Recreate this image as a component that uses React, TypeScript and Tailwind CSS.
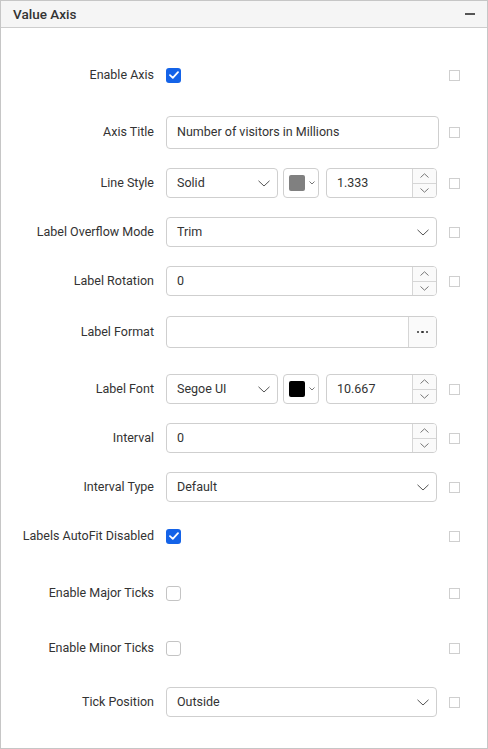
import React from "react";

const font = { fontFamily: "Roboto, 'Liberation Sans', sans-serif" };

function Chevron() {
  return (
    <svg width="12" height="7" viewBox="0 0 12 7" fill="none">
      <path d="M0.5 0.8 L6 6 L11.5 0.8" stroke="#555" strokeWidth="1" />
    </svg>
  );
}

function SmallChevron({ up = false }: { up?: boolean }) {
  return (
    <svg width="9" height="5" viewBox="0 0 9 5" fill="none">
      <path d={up ? "M0.5 4.5 L4.5 0.8 L8.5 4.5" : "M0.5 0.5 L4.5 4.2 L8.5 0.5"} stroke="#777" strokeWidth="1" />
    </svg>
  );
}

function Side() {
  return <div className="w-[11px] h-[11px] border border-[#cfcfcf] bg-white shrink-0" />;
}

function Check({ on }: { on: boolean }) {
  if (!on) return <div className="w-[15px] h-[15px] rounded-[3px] border border-[#c4c4c4] bg-white" />;
  return (
    <div className="w-[15px] h-[15px] rounded-[3px] bg-[#1463e8] flex items-center justify-center">
      <svg width="10" height="8" viewBox="0 0 10 8" fill="none">
        <path d="M1 4.2 L3.8 6.8 L9 1.2" stroke="white" strokeWidth="1.8" strokeLinecap="round" strokeLinejoin="round" />
      </svg>
    </div>
  );
}

function Row({ label, h = 30, mt, children, side = true }: { label: string; h?: number; mt: string; children: React.ReactNode; side?: boolean }) {
  return (
    <div className={`flex items-center ${mt}`} style={{ height: h }}>
      <div className="w-[165px] pr-[12px] text-right text-[12.5px] text-[#333] shrink-0">{label}</div>
      <div className="w-[283px] h-full flex items-center shrink-0">{children}</div>
      {side && <Side />}
    </div>
  );
}

function Select({ value, w }: { value: string; w: string }) {
  return (
    <div className={`${w} h-full border border-[#cfcfcf] rounded-[4px] flex items-center justify-between pl-[10px] pr-[7px] text-[12.5px] text-[#333] bg-white`}>
      <span>{value}</span>
      <Chevron />
    </div>
  );
}

function Color({ c }: { c: string }) {
  return (
    <div className="ml-[5px] w-[36px] h-full border border-[#cfcfcf] rounded-[4px] flex items-center pl-[5px] gap-[4px] bg-white">
      <div className="w-[16px] h-[16px] rounded-[2px]" style={{ background: c }} />
      <svg width="6" height="4" viewBox="0 0 6 4" fill="none">
        <path d="M0.5 0.5 L3 3 L5.5 0.5" stroke="#666" strokeWidth="0.9" />
      </svg>
    </div>
  );
}

function Numeric({ value, w, ml = "" }: { value: string; w: string; ml?: string }) {
  return (
    <div className={`${w} ${ml} h-full border border-[#cfcfcf] rounded-[4px] flex bg-white overflow-hidden`}>
      <div className="flex-1 flex items-center pl-[10px] text-[12.5px] text-[#333]">{value}</div>
      <div className="w-[24px] border-l border-[#d6d6d6] flex flex-col">
        <div className="flex-1 flex items-center justify-center border-b border-[#d6d6d6] bg-[#fafafa]">
          <SmallChevron up />
        </div>
        <div className="flex-1 flex items-center justify-center bg-[#fafafa]">
          <SmallChevron />
        </div>
      </div>
    </div>
  );
}

export default function App() {
  return (
    <div style={font} className="w-[488px] h-[749px] border border-[#c6c6c6] bg-white flex flex-col">
      <div className="h-[27px] bg-[#f5f5f5] border-b border-[#cdcdcd] flex items-center justify-between pl-[12px] pr-[12px] shrink-0">
        <span className="text-[13.5px] font-medium text-[#333]">Value Axis</span>
        <div className="w-[10px] h-[2px] bg-[#555]" />
      </div>
      <div className="pt-[32px]">
        <Row label="Enable Axis" mt="">
          <Check on />
        </Row>
        <Row label="Axis Title" h={33} mt="mt-[26px]">
          <div className="w-[273px] h-full border border-[#cfcfcf] rounded-[4px] flex items-center pl-[10px] text-[12.5px] text-[#333] bg-white">
            Number of visitors in Millions
          </div>
        </Row>
        <Row label="Line Style" mt="mt-[19px]">
          <Select value="Solid" w="w-[112px]" />
          <Color c="#808080" />
          <Numeric value="1.333" w="w-[111px]" ml="ml-[7px]" />
        </Row>
        <Row label="Label Overflow Mode" mt="mt-[19px]">
          <Select value="Trim" w="w-[271px]" />
        </Row>
        <Row label="Label Rotation" mt="mt-[19px]">
          <Numeric value="0" w="w-[271px]" />
        </Row>
        <Row label="Label Format" h={32} mt="mt-[20px]" side={false}>
          <div className="w-[271px] h-full border border-[#cfcfcf] rounded-[4px] flex bg-white overflow-hidden">
            <div className="flex-1" />
            <div className="w-[28px] border-l border-[#d6d6d6] bg-[#fafafa] flex items-center justify-center gap-[2px]">
              <div className="w-[2.5px] h-[2.5px] rounded-full bg-[#333]" />
              <div className="w-[2.5px] h-[2.5px] rounded-full bg-[#333]" />
              <div className="w-[2.5px] h-[2.5px] rounded-full bg-[#333]" />
            </div>
          </div>
        </Row>
        <Row label="Label Font" mt="mt-[26px]">
          <Select value="Segoe UI" w="w-[112px]" />
          <Color c="#000000" />
          <Numeric value="10.667" w="w-[111px]" ml="ml-[7px]" />
        </Row>
        <Row label="Interval" mt="mt-[19px]">
          <Numeric value="0" w="w-[271px]" />
        </Row>
        <Row label="Interval Type" mt="mt-[19px]">
          <Select value="Default" w="w-[271px]" />
        </Row>
        <Row label="Labels AutoFit Disabled" mt="mt-[19px]">
          <Check on />
        </Row>
        <Row label="Enable Major Ticks" mt="mt-[27px]">
          <Check on={false} />
        </Row>
        <Row label="Enable Minor Ticks" mt="mt-[25px]">
          <Check on={false} />
        </Row>
        <Row label="Tick Position" mt="mt-[24px]">
          <Select value="Outside" w="w-[271px]" />
        </Row>
      </div>
    </div>
  );
}
